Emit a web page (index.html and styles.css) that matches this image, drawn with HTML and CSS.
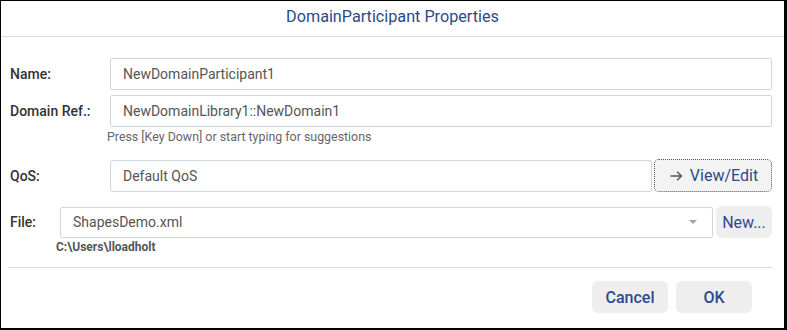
FILE: index.html
```html
<!DOCTYPE html>
<html>
<head>
<meta charset="utf-8">
<link rel="stylesheet" href="styles.css">
</head>
<body>
<div class="dialog">
  <div class="header">DomainParticipant Properties</div>
  <div class="form">
    <div class="row">
      <label class="label">Name:</label>
      <div class="input">NewDomainParticipant1</div>
    </div>
    <div class="row row-gap">
      <label class="label">Domain Ref.:</label>
      <div class="input">NewDomainLibrary1::NewDomain1</div>
    </div>
    <div class="hint">Press [Key Down] or start typing for suggestions</div>
    <div class="row row-qos">
      <label class="label">QoS:</label>
      <div class="qos-field">
        <div class="input">Default QoS</div>
        <button class="btn btn-view"><svg class="arrow" width="13" height="10" viewBox="0 0 13 10"><path d="M0.5 5H11.5M7 0.8L11.5 5L7 9.2" fill="none" stroke="#555" stroke-width="1.4"/></svg>View/Edit</button>
      </div>
    </div>
    <div class="file-row">
      <label class="label">File:</label>
      <div class="select">ShapesDemo.xml<span class="caret"></span></div>
      <button class="btn btn-new">New...</button>
    </div>
    <div class="path">C:\Users\lloadholt</div>
    <div class="sep"></div>
  </div>
  <div class="footer">
    <button class="btn btn-foot">Cancel</button>
    <button class="btn btn-foot">OK</button>
  </div>
</div>
</body>
</html>
```

FILE: styles.css
```css
html, body {
  margin: 0;
  padding: 0;
  background: #fff;
}
.dialog {
  width: 787px;
  height: 330px;
  box-sizing: border-box;
  border-style: solid;
  border-color: #000;
  border-width: 1px 3px 2px 1px;
  font-family: Roboto, "Liberation Sans", sans-serif;
  display: flex;
  flex-direction: column;
  background: #fff;
}
.header {
  height: 36px;
  box-sizing: border-box;
  padding-top: 6px;
  line-height: 20px;
  text-align: center;
  font-size: 16.2px;
  color: #2b4a8b;
  border-bottom: 1px solid #dcdcdc;
}
.form {
  padding: 21px 12px 0 9px;
  display: flex;
  flex-direction: column;
}
.row {
  display: grid;
  grid-template-columns: 100px 1fr;
  align-items: center;
  height: 32px;
}
.row-gap { margin-top: 5px; }
.label {
  font-size: 14px;
  color: #333;
  font-weight: 500;
}
.input {
  height: 32px;
  box-sizing: border-box;
  border: 1px solid #ccd6e2;
  border-radius: 2px;
  padding: 0 12px;
  line-height: 30px;
  font-size: 14px;
  color: #555;
}
.hint {
  margin: 2px 0 0 97px;
  font-size: 12.4px;
  line-height: 16px;
  color: #666;
}
.row-qos {
  margin-top: 14px;
  height: 33px;
}
.qos-field {
  display: flex;
  align-items: center;
  gap: 2px;
}
.qos-field .input { flex: 1; }
.btn {
  font-family: Roboto, "Liberation Sans", sans-serif;
  border: none;
  background: #eeeeee;
  color: #2a4a8e;
  font-size: 16px;
  padding: 0;
  cursor: pointer;
}
.btn-view {
  width: 118px;
  height: 33px;
  box-sizing: border-box;
  border: 1px dotted #555;
  border-radius: 5px;
  background: #f3f3f3;
  display: flex;
  align-items: center;
  justify-content: center;
  gap: 7px;
  padding-left: 2px;
}
.arrow { display: block; }
.file-row {
  margin-top: 14px;
  display: grid;
  grid-template-columns: 47px 1fr 56px;
  column-gap: 3px;
  align-items: center;
  height: 32px;
}
.select {
  height: 31px;
  box-sizing: border-box;
  border: 1px solid #ccd6e2;
  border-radius: 2px;
  padding: 0 12px;
  line-height: 29px;
  font-size: 14px;
  color: #555;
  display: flex;
  justify-content: space-between;
  align-items: center;
}
.caret {
  width: 0;
  height: 0;
  border-left: 4px solid transparent;
  border-right: 4px solid transparent;
  border-top: 4px solid #9aa6b6;
  margin-right: 3px;
}
.btn-new {
  height: 32px;
  border-radius: 6px;
}
.path {
  margin: 1px 0 0 46px;
  font-size: 12px;
  line-height: 16px;
  font-weight: 700;
  color: #555;
}
.sep {
  margin: 12px -1px 0 -2px;
  height: 1px;
  background: #dcdcdc;
}
.footer {
  display: flex;
  justify-content: flex-end;
  gap: 8px;
  padding: 13px 32px 0 0;
}
.btn-foot {
  width: 76px;
  height: 32px;
  border-radius: 6px;
  font-weight: 500;
}
```
